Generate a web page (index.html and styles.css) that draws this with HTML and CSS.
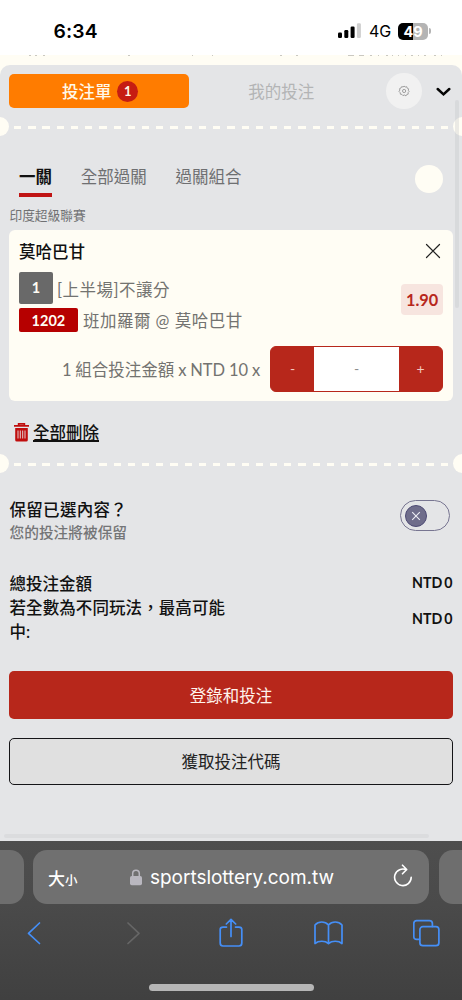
FILE: index.html
```html
<!DOCTYPE html>
<html lang="zh-Hant">
<head>
<meta charset="utf-8">
<meta name="viewport" content="width=device-width, initial-scale=1">
<title>投注單</title>
<link rel="stylesheet" href="styles.css">
</head>
<body>
<div class="phone">
  <header class="status">
    <span class="clock">6:34</span>
    <div class="status-right">
      <svg class="signal" width="24" height="16" viewBox="0 0 24 16"><rect x="0" y="9.5" width="4" height="5.5" rx="1.2"/><rect x="6.3" y="7" width="4" height="8" rx="1.2"/><rect x="12.6" y="3.5" width="4" height="11.5" rx="1.2"/><rect x="18.9" y="0.3" width="4" height="14.7" rx="1.2" fill="#cfcfcf"/></svg>
      <span class="network">4G</span>
      <span class="battery">49</span><span class="battery-tip"></span>
    </div>
  </header>
  <div class="page-strip"><svg width="462" height="2" viewBox="0 0 462 2" stroke="#a8a69f" stroke-width="1"><path d="M29 .5h2M35 .5h2M43 .5h2M128 .5h2M192 .5h1M212 .5h1M280 .5h2M296 .5h2M348 .5h6M359 .5h5M370 .5h2M378 .5h1M386 .5h2M392 .5h1M398 .5h1M405 .5h1M411 .5h2M418 .5h1M424 .5h2M434 .5h2M441 .5h1" opacity=".6"/></svg></div>

  <main class="slip">
    <nav class="slip-tabs">
      <div class="slip-tab active">投注單<span class="count">1</span></div>
      <div class="slip-tab">我的投注</div>
      <div class="gear"><svg width="12" height="12" viewBox="0 0 12 12" fill="none" stroke="#8c8c8c" stroke-width=".8"><path d="M6 1 7.2 2l1.500-.3.5 1.500 1.400.6-.3 1.500.8 1.100-1 1.200.1 1.500-1.500.5-.7 1.300L6.400 10l-1.500.6-1-1.200-1.500-.2-.2-1.500L1 6.500l.8-1.400-.2-1.500L3 3l.7-1.400L5.200 2z"/><circle cx="6.100" cy="6" r="1.600"/></svg></div>
      <svg class="chevron" width="15" height="10" viewBox="0 0 15 10"><path d="M1.700 2 7.500 7.400 13.300 2" fill="none" stroke="#050505" stroke-width="2.500" stroke-linecap="round"/></svg>
    </nav>
    <div class="tear"><span class="notch"></span><span class="dashes"></span><span class="notch"></span></div>

    <nav class="modes">
      <span class="mode selected">一關</span><span class="mode">全部過關</span><span class="mode">過關組合</span><span class="info-dot"></span>
    </nav>
    <div class="league">印度超級聯賽</div>

    <section class="card">
      <div class="card-head"><span>莫哈巴甘</span><svg width="16" height="16" viewBox="0 0 16 16"><path d="M1.500 1.500l13 13M14.500 1.500l-13 13" stroke="#222" stroke-width="1.200" stroke-linecap="round"/></svg></div>
      <div class="pick">
        <div class="pick-lines">
          <div class="line market"><span class="tag gray">1</span><span class="wide">[上半場]不讓分</span></div>
          <div class="line match"><span class="tag red">1202</span><span class="wide">班加羅爾 @ 莫哈巴甘</span></div>
        </div>
        <span class="odds">1.90</span>
      </div>
      <div class="stake">
        <span class="stake-label">1 組合投注金額 x NTD 10 x</span>
        <div class="stepper"><span class="step">-</span><span class="amount">-</span><span class="step">+</span></div>
      </div>
    </section>

    <div class="clear"><svg width="15" height="19" viewBox="0 0 15 19"><path d="M4.600 2.400V.900h5.800v1.500M0 2.900h15" fill="none" stroke="#c00d0d" stroke-width="1.600"/><path d="M1.200 5h12.600v12q0 1.600-1.600 1.600H2.800q-1.600 0-1.600-1.600z" fill="#c00d0d"/><path d="M4 7.500v8M6.300 7.500v8M8.700 7.500v8M11 7.500v8" stroke="#e4e5e7" stroke-width=".9"/></svg><span>全部刪除</span></div>
    <div class="tear"><span class="notch"></span><span class="dashes"></span><span class="notch"></span></div>

    <section class="keep">
      <div><div class="keep-title">保留已選內容？</div><div class="keep-note">您的投注將被保留</div></div>
      <div class="toggle"><span class="knob"><svg width="10" height="10" viewBox="0 0 10 10"><path d="M1.200 1.200l7.600 7.600M8.800 1.200l-7.600 7.600" stroke="#eeeef5" stroke-width="1.100"/></svg></span></div>
    </section>
    <section class="totals">
      <div class="total"><span>總投注金額</span><span class="money">NTD 0</span></div>
      <div class="total"><span class="total-label">若全數為不同玩法，最高可能中:</span><span class="money">NTD 0</span></div>
    </section>
    <div class="actions">
      <div class="button primary">登錄和投注</div>
      <div class="button secondary">獲取投注代碼</div>
    </div>
    <span class="scroll-y"></span>
    <span class="scroll-x"></span>
  </main>

  <footer class="browser">
    <div class="addresses">
      <div class="side left"></div>
      <div class="address">
        <span class="text-size">大<small>小</small></span>
        <span class="site"><svg width="12" height="17" viewBox="0 0 12 17"><path d="M2.700 8V4.500a3.300 3.300 0 0 1 6.600 0V8" fill="none" stroke="#b9b7bf" stroke-width="1.500"/><rect x="0" y="7" width="12" height="9.300" rx="1.800" fill="#b9b7bf"/></svg><span>sportslottery.com.tw</span></span>
        <svg class="reload" width="20" height="23" viewBox="0 0 20 23" fill="none" stroke="#fff" stroke-width="1.600" stroke-linecap="round" stroke-linejoin="round"><path d="M18.200 13.300A8.300 8.300 0 1 1 13.500 5.800M9.500 1.200 13.700 5.500 9.500 9.800"/></svg>
      </div>
      <div class="side right"></div>
    </div>
    <div class="tools">
      <svg width="28" height="30" viewBox="0 0 28 30"><path d="M19.500 5 8.500 15.300l11 10.200"/></svg>
      <svg class="off" width="28" height="30" viewBox="0 0 28 30"><path d="M10 5 21 15.300 10 25.500"/></svg>
      <svg width="28" height="30" viewBox="0 0 28 30"><path d="M10.500 9.100H7q-2.800 0-2.800 2.500V25q0 3 2.800 3h16q2.800 0 2.800-3V11.600q0-2.500-2.800-2.500h-3.500M15 18.500V1.300M10.300 6 15 1.300 19.700 6"/></svg>
      <svg width="30" height="30" viewBox="0 0 30 30"><path d="M15.500 7V25.500M15.500 7C12 3 5.500 3 2 7V25.500C5.500 22.500 12 22.500 15.500 25.500 19 22.500 25.500 22.500 29 25.500V7C25.500 3 19 3 15.500 7z"/></svg>
      <svg width="28" height="30" viewBox="0 0 28 30"><rect x="6.900" y="8.700" width="19" height="19" rx="3"/><path d="M6.500 21.400H3.800q-3 0-3-3V5.600q0-3 3-3h12.600q3 0 3 3v2.800"/></svg>
    </div>
    <div class="home"></div>
  </footer>
</div>
</body>
</html>
```
FILE: styles.css
```css
* { box-sizing: border-box; }
body { margin: 0; background: #fff; font-family: Lato, "Noto Sans CJK TC", sans-serif; color: #111; }
svg { display: block; flex: none; }
.phone { width: 462px; height: 1000px; overflow: hidden; display: flex; flex-direction: column; background: #fffdf4; }

.status { height: 55px; background: #fff; display: flex; justify-content: space-between; padding: 19px 31px 0 53.500px; font-family: Inter, sans-serif; color: #000; }
.clock { font-size: 19.300px; font-weight: 600; line-height: 24px; letter-spacing: .15px; }
.status-right { display: flex; height: 24px; align-items: center; }
.signal { margin: -1px 7px 0 0; }
.network { font-size: 16px; width: 29px; letter-spacing: -.2px; }
.battery { width: 30px; height: 17px; border-radius: 5px; background: linear-gradient(90deg, #000 50%, #b4b4b4 50%); color: #fff; font-size: 14.500px; font-weight: 700; line-height: 17px; text-align: center; }
.battery-tip { width: 2px; height: 6px; border-radius: 0 2px 2px 0; background: #b4b4b4; margin-left: 1px; }
.page-strip { height: 10px; }

.slip { height: 776px; flex: none; background: #e4e5e7; border-radius: 10px 10px 0 0; position: relative; overflow: hidden; }
.slip-tabs { height: 52px; display: flex; align-items: center; padding: 0 11px 0 9.400px; }
.slip-tab { width: 179.500px; height: 34px; display: flex; align-items: center; justify-content: center; gap: 6px; font-size: 16.500px; color: #b3b4b5; border-radius: 5px; padding-left: 5px; }
.slip-tab.active { background: #ff7c00; color: #fff8e8; font-weight: 500; padding: 0 0 0 2px; }
.count { width: 21px; height: 21px; border-radius: 50%; background: #c61d12; font-size: 13px; font-weight: 700; line-height: 21px; text-align: center; }
.gear { width: 35.500px; height: 35.500px; margin-left: 18px; border-radius: 50%; background: #f1f1f1; display: grid; place-items: center; }
.chevron { margin: 2px 0 0 auto; }

.tear { height: 19px; display: flex; align-items: center; justify-content: space-between; margin: 0 -10px; }
.notch { width: 19px; height: 19px; border-radius: 50%; background: #fffdf4; flex: none; }
.dashes { flex: 1; height: 2.500px; margin: 2px 3px 0 5px; background: repeating-linear-gradient(90deg, #fffdf4 0 7.300px, transparent 7.300px 14.220px); }

.modes { height: 69px; padding: 26px 19px 0; display: flex; gap: 28.800px; font-size: 16.500px; line-height: 31px; color: #6e6f71; }
.mode { height: 35px; }
.mode.selected { color: #111; font-weight: 700; border-bottom: 4px solid #c01414; }
.info-dot { width: 28px; height: 28px; border-radius: 50%; background: #fffdf4; margin: 3px 0 0 auto; }
.league { height: 25px; padding-left: 9.500px; font-size: 12.700px; line-height: 21px; color: #707173; }

.card { height: 171px; margin: 0 9.400px; padding: 9px 9.500px 0; background: #fffdf4; border-radius: 6px; }
.card-head { display: flex; justify-content: space-between; align-items: center; height: 24px; font-size: 16.500px; font-weight: 500; padding-right: 2px; }
.pick { display: flex; justify-content: space-between; margin-top: 9px; height: 65px; }
.pick-lines { display: flex; flex-direction: column; gap: 4px; }
.line { display: flex; align-items: center; gap: 5px; font-size: 16.500px; color: #737370; line-height: 24px; white-space: nowrap; }
.market { gap: 4px; }
.wide { letter-spacing: .5px; padding-top: 2px; margin-bottom: -1px; }
.match .wide { line-height: 23px; }
.tag { color: #fffdf4; font-size: 14.500px; font-weight: 700; text-align: center; border-radius: 2px; }
.tag.gray { width: 34px; height: 32px; line-height: 32px; background: #696969; }
.tag.red { width: 59px; height: 24px; line-height: 25px; background: #b60000; }
.odds { width: 42px; height: 31px; margin-top: 12px; border-radius: 4px; background: #f7e5df; color: #b7281c; font-weight: 700; font-size: 16.300px; line-height: 31px; text-align: center; }
.stake { display: flex; justify-content: flex-end; align-items: center; gap: 10px; margin-top: 9px; }
.stake-label { font-size: 16.500px; color: #737370; white-space: nowrap; word-spacing: -.4px; }
.stepper { width: 173px; height: 46px; display: flex; background: #b7271b; border: 1px solid #b7271b; border-radius: 6px; overflow: hidden; text-align: center; line-height: 44px; font-size: 14px; }
.step { width: 43px; color: #f3c8c1; }
.amount { flex: 1; background: #fff; color: #8c8c8c; }

.clear { height: 53px; display: flex; gap: 4px; padding: 22px 0 0 14px; font-size: 16.500px; font-weight: 500; line-height: 20px; color: #111; text-decoration: underline; text-decoration-thickness: 1.500px; text-underline-offset: 1px; }
.keep { height: 95px; padding: 25px 12px 0 9.500px; display: flex; justify-content: space-between; }
.keep-title { font-size: 16.500px; font-weight: 500; line-height: 24px; letter-spacing: .3px; }
.keep-note { font-size: 14.700px; font-weight: 500; line-height: 20px; color: #747577; }
.toggle { width: 50px; height: 31px; margin-top: 2px; border: 1.200px solid #777591; border-radius: 16px; padding: 4px 3.500px; }
.knob { width: 22px; height: 22px; border: 1px solid #4d4a74; border-radius: 50%; background: #6f6d8b; display: grid; place-items: center; }
.totals { padding: 4px 9.500px 0; height: 103px; font-size: 16.500px; line-height: 24px; font-weight: 500; }
.total { display: flex; justify-content: space-between; align-items: center; }
.total-label { width: 222px; letter-spacing: .08px; }
.money { font-size: 14.200px; font-weight: 700; word-spacing: -1.500px; margin-top: -2px; }
.actions { display: flex; flex-direction: column; gap: 19px; padding: 0 9.400px; }
.button { height: 47.500px; border-radius: 5px; display: grid; place-items: center; font-size: 16.500px; }
.primary { background: #b7271b; color: #fff4ed; }
.secondary { background: #e0e0e0; border: 1px solid #151518; color: #222; }
.scroll-y { position: absolute; left: 455px; top: 35px; width: 3.500px; height: 208px; border-radius: 2px; background: rgba(190, 192, 195, .3); }
.scroll-x { position: absolute; left: 4px; top: 769px; width: 425px; height: 3.500px; border-radius: 2px; background: #dbdcde; }

.browser { height: 159px; flex: none; background: linear-gradient(#4e4e4e, #4a4a4a 40%, #404040); padding-top: 9px; font-family: Inter, "Noto Sans CJK TC", sans-serif; }
.addresses { display: flex; justify-content: space-between; height: 54px; }
.side { width: 23.500px; background: #6e6e6e; }
.side.left { border-radius: 0 14px 14px 0; }
.side.right { border-radius: 14px 0 0 14px; }
.address { width: 396px; background: #707070; border-radius: 14px; display: flex; align-items: center; padding: 0 16px 0 15px; color: #fff; }
.text-size { width: 82px; font-size: 17px; font-weight: 500; white-space: nowrap; }
.text-size small { font-size: 12.500px; }
.site { display: flex; align-items: center; gap: 8px; font-size: 19px; letter-spacing: -.03px; white-space: nowrap; }
.site span { padding-top: 1px; }
.reload { margin: -4px 0 0 auto; }
.tools { display: flex; justify-content: space-between; padding: 14px 21px 0 20px; height: 80px; fill: none; stroke: #458ff7; stroke-width: 1.700; stroke-linecap: round; stroke-linejoin: round; }
.tools .off { stroke: #666; }
.home { width: 165px; height: 7px; margin: 0 auto; border-radius: 4px; background: #b6b6b6; }
```
